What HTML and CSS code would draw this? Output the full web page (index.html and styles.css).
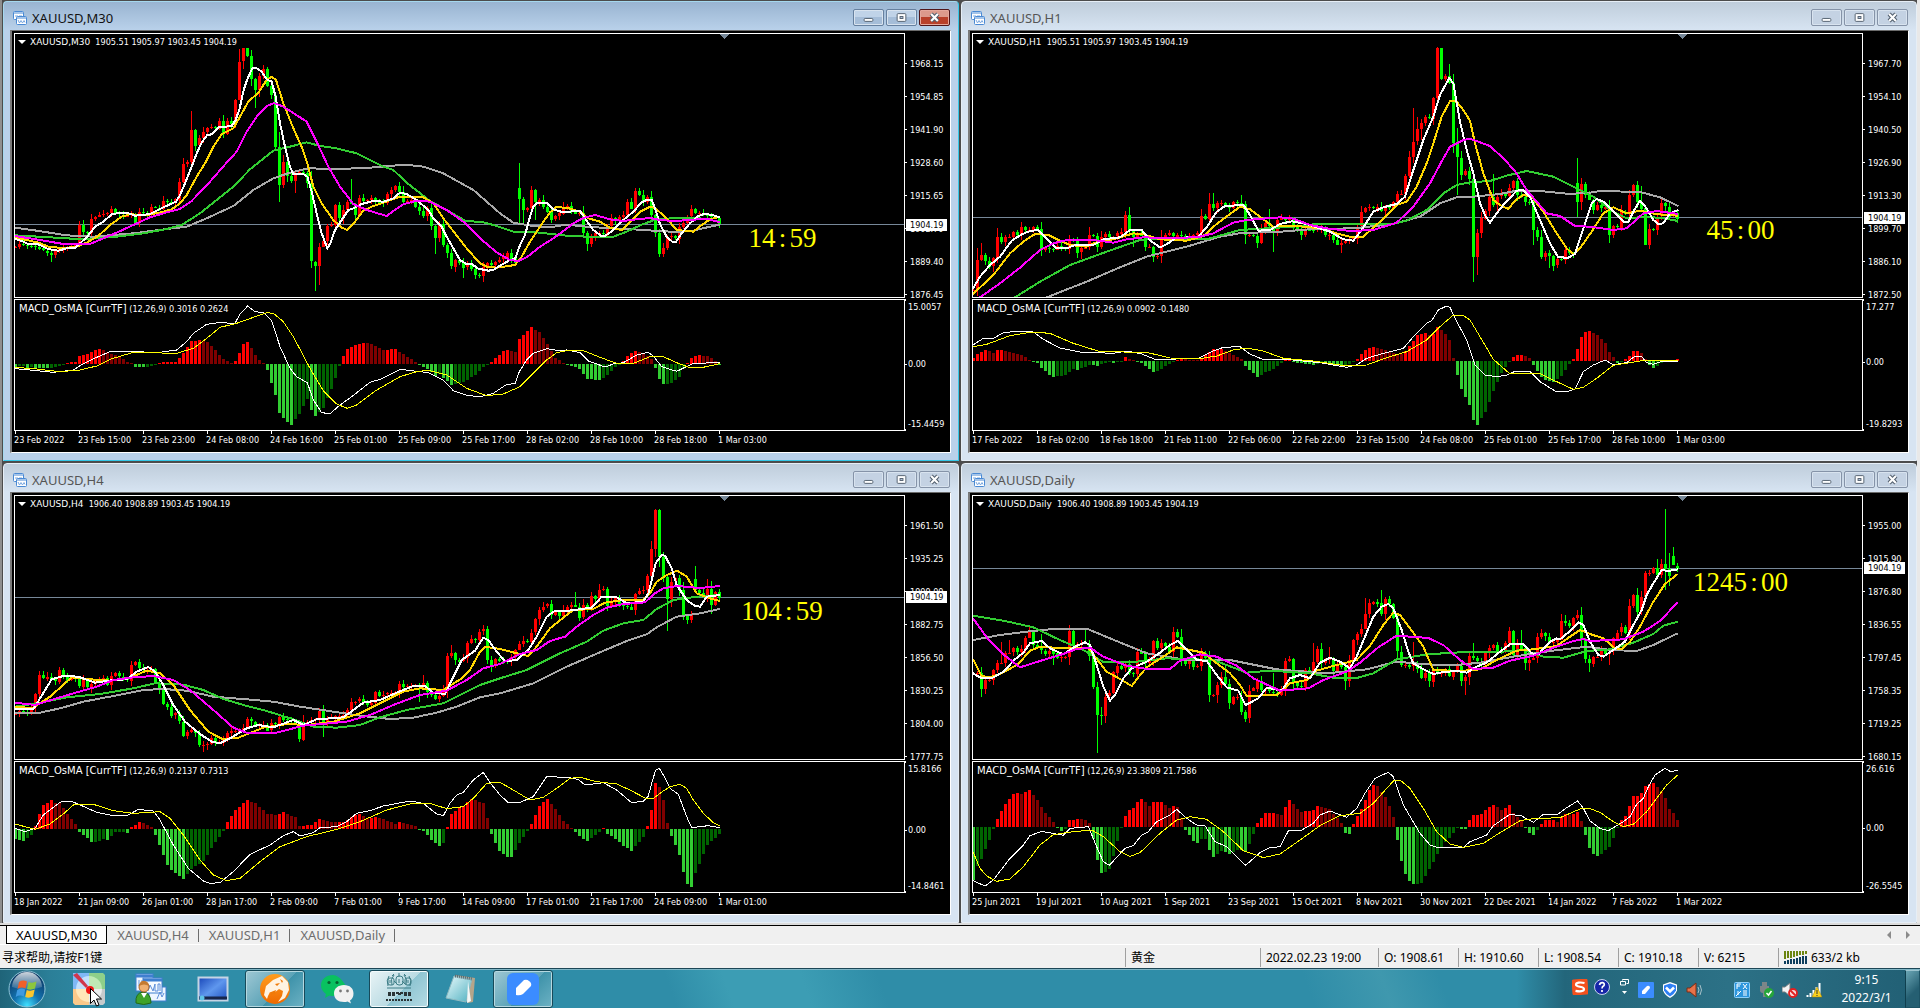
FILE: index.html
```html
<!DOCTYPE html>
<html lang="zh-CN">
<head>
<meta charset="utf-8">
<title>XAUUSD</title>
<link rel="stylesheet" href="styles.css">
</head>
<body>
<svg class="sprite" aria-hidden="true">
  <symbol id="i-chart" viewBox="0 0 14 14">
    <rect x="0.5" y="0.5" width="10" height="8" rx="1" fill="#fff" stroke="#4a8ad4"/>
    <path d="M1 2h9" stroke="#4a8ad4"/>
    <path d="M2 5h1M4 4v2M6 5h1M8 4v2" stroke="#7aa8e0"/>
    <rect x="3.500" y="5.500" width="10" height="8" rx="1" fill="#fff" stroke="#4a8ad4"/>
    <path d="M4 7h9" stroke="#4a8ad4"/>
    <path d="M5 9l1.500 3L8 9.500l1.500 2.500L11 9.500l1 2" fill="none" stroke="#7aa8e0"/>
  </symbol>
  <symbol id="i-min" viewBox="0 0 30 15">
    <rect x="10.500" y="8.500" width="9" height="3" rx="1" fill="#fff" stroke="#53606f"/>
  </symbol>
  <symbol id="i-max" viewBox="0 0 30 15">
    <rect x="10.500" y="3.500" width="9" height="8" rx="1" fill="#fff" stroke="#53606f"/>
    <rect x="13.500" y="6.500" width="3" height="2" fill="#b5c9de" stroke="#53606f"/>
  </symbol>
  <symbol id="i-close" viewBox="0 0 30 15">
    <path d="M11.500 4l7 7M18.500 4l-7 7" stroke="#53606f" stroke-width="4.400"/>
    <path d="M11.500 4l7 7M18.500 4l-7 7" stroke="#fff" stroke-width="2.200"/>
  </symbol>
</svg>

<main class="desk">
  <section class="win active">
    <header class="title">
      <svg class="ticon"><use href="#i-chart"/></svg><h2>XAUUSD,M30</h2>
      <button type="button" aria-label="Minimize"><svg><use href="#i-min"/></svg></button>
      <button type="button" aria-label="Maximize"><svg><use href="#i-max"/></svg></button>
      <button type="button" class="close" aria-label="Close"><svg><use href="#i-close"/></svg></button>
    </header>
    <div class="client">
      <div class="plot">
        <svg class="price" data-chart="m30" viewBox="45 102 2667 789" preserveAspectRatio="none"></svg>
        <p class="head"><span>XAUUSD,M30</span>&nbsp; 1905.51 1905.97 1903.45 1904.19</p>
        <p class="timer t-m30">14<i>:</i>59</p>
      </div>
      <div class="scale s-m30">
        <ul><li>1968.15</li><li>1954.85</li><li>1941.90</li><li>1928.60</li><li>1915.65</li><li>1902.70</li><li>1889.40</li><li>1876.45</li></ul>
        <b>1904.19</b>
      </div>
      <div class="plot">
        <svg class="macd" data-chart="m30" viewBox="45 900 2667 390" preserveAspectRatio="none"></svg>
        <p class="ind"><span>MACD_OsMA [CurrTF]</span> (12,26,9) 0.3016 0.2624</p>
      </div>
      <div class="sub s-m30"><span>15.0057</span><span class="zero">0.00</span><span>-15.4459</span></div>
      <ul class="time"><li>23 Feb 2022</li><li>23 Feb 15:00</li><li>23 Feb 23:00</li><li>24 Feb 08:00</li><li>24 Feb 16:00</li><li>25 Feb 01:00</li><li>25 Feb 09:00</li><li>25 Feb 17:00</li><li>28 Feb 02:00</li><li>28 Feb 10:00</li><li>28 Feb 18:00</li><li>1 Mar 03:00</li></ul>
    </div>
  </section>

  <section class="win">
    <header class="title">
      <svg class="ticon"><use href="#i-chart"/></svg><h2>XAUUSD,H1</h2>
      <button type="button" aria-label="Minimize"><svg><use href="#i-min"/></svg></button>
      <button type="button" aria-label="Maximize"><svg><use href="#i-max"/></svg></button>
      <button type="button" class="close" aria-label="Close"><svg><use href="#i-close"/></svg></button>
    </header>
    <div class="client">
      <div class="plot">
        <svg class="price" data-chart="h1" viewBox="39 102 2667 789" preserveAspectRatio="none"></svg>
        <p class="head"><span>XAUUSD,H1</span>&nbsp; 1905.51 1905.97 1903.45 1904.19</p>
        <p class="timer t-h1">45<i>:</i>00</p>
      </div>
      <div class="scale s-h1">
        <ul><li>1967.70</li><li>1954.10</li><li>1940.50</li><li>1926.90</li><li>1913.30</li><li>1899.70</li><li>1886.10</li><li>1872.50</li></ul>
        <b>1904.19</b>
      </div>
      <div class="plot">
        <svg class="macd" data-chart="h1" viewBox="39 900 2667 390" preserveAspectRatio="none"></svg>
        <p class="ind"><span>MACD_OsMA [CurrTF]</span> (12,26,9) 0.0902 -0.1480</p>
      </div>
      <div class="sub s-h1"><span>17.277</span><span class="zero">0.00</span><span>-19.8293</span></div>
      <ul class="time"><li>17 Feb 2022</li><li>18 Feb 02:00</li><li>18 Feb 18:00</li><li>21 Feb 11:00</li><li>22 Feb 06:00</li><li>22 Feb 22:00</li><li>23 Feb 15:00</li><li>24 Feb 08:00</li><li>25 Feb 01:00</li><li>25 Feb 17:00</li><li>28 Feb 10:00</li><li>1 Mar 03:00</li></ul>
    </div>
  </section>

  <section class="win">
    <header class="title">
      <svg class="ticon"><use href="#i-chart"/></svg><h2>XAUUSD,H4</h2>
      <button type="button" aria-label="Minimize"><svg><use href="#i-min"/></svg></button>
      <button type="button" aria-label="Maximize"><svg><use href="#i-max"/></svg></button>
      <button type="button" class="close" aria-label="Close"><svg><use href="#i-close"/></svg></button>
    </header>
    <div class="client">
      <div class="plot">
        <svg class="price" data-chart="h4" viewBox="45 108 2667 789" preserveAspectRatio="none"></svg>
        <p class="head"><span>XAUUSD,H4</span>&nbsp; 1906.40 1908.89 1903.45 1904.19</p>
        <p class="timer t-h4">104<i>:</i>59</p>
      </div>
      <div class="scale s-h4">
        <ul><li>1961.50</li><li>1935.25</li><li>1909.00</li><li>1882.75</li><li>1856.50</li><li>1830.25</li><li>1804.00</li><li>1777.75</li></ul>
        <b>1904.19</b>
      </div>
      <div class="plot">
        <svg class="macd" data-chart="h4" viewBox="45 906 2667 390" preserveAspectRatio="none"></svg>
        <p class="ind"><span>MACD_OsMA [CurrTF]</span> (12,26,9) 0.2137 0.7313</p>
      </div>
      <div class="sub s-h4"><span>15.8166</span><span class="zero">0.00</span><span>-14.8461</span></div>
      <ul class="time"><li>18 Jan 2022</li><li>21 Jan 09:00</li><li>26 Jan 01:00</li><li>28 Jan 17:00</li><li>2 Feb 09:00</li><li>7 Feb 01:00</li><li>9 Feb 17:00</li><li>14 Feb 09:00</li><li>17 Feb 01:00</li><li>21 Feb 17:00</li><li>24 Feb 09:00</li><li>1 Mar 01:00</li></ul>
    </div>
  </section>

  <section class="win">
    <header class="title">
      <svg class="ticon"><use href="#i-chart"/></svg><h2>XAUUSD,Daily</h2>
      <button type="button" aria-label="Minimize"><svg><use href="#i-min"/></svg></button>
      <button type="button" aria-label="Maximize"><svg><use href="#i-max"/></svg></button>
      <button type="button" class="close" aria-label="Close"><svg><use href="#i-close"/></svg></button>
    </header>
    <div class="client">
      <div class="plot">
        <svg class="price" data-chart="d1" viewBox="39 108 2667 789" preserveAspectRatio="none"></svg>
        <p class="head"><span>XAUUSD,Daily</span>&nbsp; 1906.40 1908.89 1903.45 1904.19</p>
        <p class="timer t-d1">1245<i>:</i>00</p>
      </div>
      <div class="scale s-d1">
        <ul><li>1955.00</li><li>1915.90</li><li>1876.80</li><li>1836.55</li><li>1797.45</li><li>1758.35</li><li>1719.25</li><li>1680.15</li></ul>
        <b>1904.19</b>
      </div>
      <div class="plot">
        <svg class="macd" data-chart="d1" viewBox="39 906 2667 390" preserveAspectRatio="none"></svg>
        <p class="ind"><span>MACD_OsMA [CurrTF]</span> (12,26,9) 23.3809 21.7586</p>
      </div>
      <div class="sub s-d1"><span>26.616</span><span class="zero">0.00</span><span>-26.5545</span></div>
      <ul class="time"><li>25 Jun 2021</li><li>19 Jul 2021</li><li>10 Aug 2021</li><li>1 Sep 2021</li><li>23 Sep 2021</li><li>15 Oct 2021</li><li>8 Nov 2021</li><li>30 Nov 2021</li><li>22 Dec 2021</li><li>14 Jan 2022</li><li>7 Feb 2022</li><li>1 Mar 2022</li></ul>
    </div>
  </section>
</main>

<nav class="tabs">
  <button type="button" class="on">XAUUSD,M30</button>
  <button type="button">XAUUSD,H4</button>
  <button type="button">XAUUSD,H1</button>
  <button type="button">XAUUSD,Daily</button>
  <div class="arrows">
    <button type="button" aria-label="Previous tab"><svg viewBox="0 0 4 8"><path d="M4 0v8L0 4z"/></svg></button>
    <button type="button" aria-label="Next tab"><svg viewBox="0 0 4 8"><path d="M0 0v8l4-4z"/></svg></button>
  </div>
</nav>

<div class="status">
  <span class="help">寻求帮助,请按F1键</span>
  <span class="c-name">黄金</span>
  <span class="c-time">2022.02.23 19:00</span>
  <span class="c-num">O: 1908.61</span>
  <span class="c-num">H: 1910.60</span>
  <span class="c-num">L: 1908.54</span>
  <span class="c-num">C: 1910.18</span>
  <span class="c-num">V: 6215</span>
  <span class="c-net"><svg viewBox="0 0 23 13"><path d="M1 0v8M4 0v7M7 0v7M10 0v6M13 0v5M16 0v4M19 0v4M22 0v3" stroke="#6b8510" stroke-width="2"/><path d="M1 10v3M4 9v4M7 8v5M10 8v5M13 7v6M16 6v7M19 5v8M22 5v8" stroke="#0c3d5c" stroke-width="2"/></svg>633/2 kb</span>
</div>

<footer class="taskbar">
  <button type="button" aria-label="Start">
    <svg width="38" height="38" viewBox="0 0 38 38">
      <defs><radialGradient id="orb" cx=".5" cy=".95" r=".9"><stop offset="0" stop-color="#3fe0ff"/><stop offset=".4" stop-color="#1373b0"/><stop offset="1" stop-color="#0b3560"/></radialGradient>
      <linearGradient id="gloss" x2="0" y2="1"><stop offset="0" stop-color="#fff" stop-opacity=".8"/><stop offset="1" stop-color="#fff" stop-opacity=".1"/></linearGradient></defs>
      <circle cx="19" cy="19" r="18" fill="url(#orb)" stroke="#8fc4d6"/>
      <path d="M4 17a15 15 0 0 1 30 0q-15 5-30 0z" fill="url(#gloss)"/>
      <path d="M11 12q4-2.500 8-.5l-1.500 7q-4-2-8 .5z" fill="#f0602a"/>
      <path d="M20.500 12q4 1.500 8-.5l-1.500 7q-4 2-8 .5z" fill="#8cc63e"/>
      <path d="M9.200 20q4-2.500 8-.5l-1.500 7q-4-2-8 .5z" fill="#3f9ae0"/>
      <path d="M18.700 20q4 1.500 8-.5l-1.500 7q-4 2-8 .5z" fill="#fcc62e"/>
    </svg>
  </button>
  <button type="button" aria-label="Picker">
    <svg width="32" height="32" viewBox="0 0 32 32">
      <path d="M0 0h16v16H0z" fill="#7fb8f5"/><path d="M16 0h14l2 2v14H16z" fill="#8ed08a"/><path d="M0 16h16v16H2l-2-2z" fill="#fbc98a"/><path d="M16 16h16v14l-2 2H16z" fill="#c5cacc"/>
      <path d="M16 3a13 13 0 0 0-13 13h13z" fill="#c2dffc"/><path d="M16 3a13 13 0 0 1 13 13H16z" fill="#bfeab5"/><path d="M3 16a13 13 0 0 0 13 13V16z" fill="#ffe7b8"/><path d="M29 16a13 13 0 0 1-13 13V16z" fill="#eceeee"/>
      <path d="M0 2l4-2 11 13-2 2z" fill="#d0364c"/><circle cx="17" cy="17" r="4" fill="#f01818"/>
    </svg>
  </button>
  <button type="button" aria-label="Trade terminal">
    <svg width="32" height="32" viewBox="0 0 32 32">
      <rect x="1" y="1" width="17" height="17" fill="#eef6ff" stroke="#3f7fd0"/><path d="M1 3h17" stroke="#3f7fd0" stroke-width="3"/><path d="M4 7v6M7 7v5" stroke="#6a9ae0"/>
      <rect x="14" y="14" width="17" height="14" fill="#eef6ff" stroke="#3f7fd0"/>
      <rect x="8" y="5" width="19" height="15" fill="#f7fbff" stroke="#3f7fd0"/><path d="M8 7h19" stroke="#3f7fd0" stroke-width="3"/>
      <path d="M13 18l2-6 3 6 2-7v7h3v-7h2v7M22 26l3-7 2 5 2-4" fill="none" stroke="#5a8cd8"/>
      <path d="M1 30q-1-10 7-11 8 1 8 11-7 3-15 0z" fill="#3fa32a" stroke="#236a18"/><path d="M6 20l3 5 3-5z" fill="#fff"/>
      <circle cx="9" cy="14" r="5" fill="#f0b070" stroke="#a8622a"/><path d="M4 13q1-6 6-5 4 1 4 5-5-3-10 0z" fill="#c47a30"/>
    </svg>
  </button>
  <button type="button" aria-label="Desktop">
    <svg width="32" height="32" viewBox="0 0 32 32">
      <defs><linearGradient id="scr" x2="1" y2="1"><stop offset="0" stop-color="#1846b8"/><stop offset=".5" stop-color="#5f97ee"/><stop offset="1" stop-color="#1c4fc0"/></linearGradient></defs>
      <rect x="1.500" y="4.500" width="29" height="23" fill="url(#scr)" stroke="#c5d4e4" stroke-width="2"/><path d="M2 25h28" stroke="#18264a" stroke-width="3"/><circle cx="5" cy="25" r="2.500" fill="#5fc4e8"/>
    </svg>
  </button>
  <button type="button" class="run" aria-label="Tiger client">
    <svg width="32" height="32" viewBox="0 0 32 32">
      <defs><linearGradient id="tig" x2="0" y2="1"><stop offset="0" stop-color="#ff9d1e"/><stop offset="1" stop-color="#ef6a00"/></linearGradient></defs>
      <circle cx="16" cy="16" r="15" fill="url(#tig)"/>
      <path d="M8 26L5 22l2-9 7-6 9-4 6 6 1 8-4 8-7 4 4-6 1-5-4-2-5 4-4-1-2 4z" fill="#fff3e2"/>
      <path d="M16 11l5-1-3 3zM12 19l5-2-1 4-4 1zM21 6l3 2-1 2z" fill="#f07a08"/>
    </svg>
  </button>
  <button type="button" aria-label="WeChat">
    <svg width="34" height="30" viewBox="0 0 34 30">
      <path d="M13 1C6 1 1 5.500 1 11.500 1 15 3 18 6 20l-1 4 4.500-2.500q2 .5 4 .5 12-1 12-10.500S20 1 13 1z" fill="#09c160"/>
      <circle cx="9" cy="8.500" r="1.600" fill="#06602f"/><circle cx="17" cy="8.500" r="1.600" fill="#06602f"/>
      <path d="M24 11c-6 0-10 3.500-10 8.500s4 8.500 10 8.500q2 0 3.500-.5L31 29.500l-1-3q3.500-2.500 3.500-7C33.500 14.500 30 11 24 11z" fill="#f1f1f1"/>
      <circle cx="20.500" cy="17" r="1.400" fill="#777"/><circle cx="27.500" cy="17" r="1.400" fill="#777"/>
    </svg>
  </button>
  <button type="button" class="run front" aria-label="MT4">
    <svg width="32" height="32" viewBox="0 0 32 32">
      <g fill="none" stroke="#3d7d86"><path d="M6 3q-3 4-1 10M11 2q-4 4-2 10M16 0v4M21 2q4 4 2 10M26 3q3 4 1 10M9 3l2-2M23 3l-2-2"/><rect x="5" y="5" width="6" height="7" rx="2"/><rect x="13" y="3" width="7" height="9" rx="3"/><rect x="22" y="5" width="6" height="7" rx="2"/><path d="M4 15h24M11 8l3 3M19 8l3 3M7 7v3M16 6v4M25 7v3"/></g>
      <path d="M5 20h23M5 22h8M15 21h4M21 22h7" stroke="#2b3436" stroke-width="2" stroke-dasharray="3 1"/><path d="M3 27h27" stroke="#2b3436" stroke-width="2" stroke-dasharray="2 1"/>
    </svg>
  </button>
  <button type="button" aria-label="Notepad">
    <svg width="32" height="32" viewBox="0 0 32 32">
      <defs><linearGradient id="pad" x2="1" y2="1"><stop offset="0" stop-color="#e9fafc"/><stop offset="1" stop-color="#4fb0c0"/></linearGradient></defs>
      <path d="M10 2l20 3-2 24-5 1z" fill="#b5a58a"/><path d="M9 3l18 3-6 23L1 25z" fill="url(#pad)" stroke="#8fb9c0"/><path d="M23 8l3 20-4 2z" fill="#f4f7f7"/><path d="M10 3l17 3" stroke="#5a6a70" stroke-width="3" stroke-dasharray="1 1"/>
    </svg>
  </button>
  <button type="button" class="run" aria-label="Notes">
    <svg width="32" height="32" viewBox="0 0 32 32">
      <rect width="32" height="32" rx="6" fill="#3b8cff"/><path d="M9 22V15l8-8q3-1 5 1 3 2 2 5l-8 8q-3 2-7 1z" fill="#fff"/>
    </svg>
  </button>
  <svg class="cursor" viewBox="0 0 12 19"><path d="M.5.500v15l3.500-3.500 2.500 6 2.500-1-2.500-6h5z" fill="#fff" stroke="#000"/></svg>

  <div class="lang">
    <svg viewBox="0 0 16 16"><rect width="16" height="16" rx="2" fill="#f4511e" transform="rotate(-4 8 8)"/><path d="M12.500 4C8 3 4 3.500 4 5.700c0 2.600 8 1.500 8 4.300 0 2.500-4 2.700-8.500 1.800" fill="none" stroke="#fff" stroke-width="2.200"/></svg>
    <svg viewBox="0 0 16 16"><circle cx="8" cy="8" r="7.500" fill="#1626a8" stroke="#c8d2ee"/><path d="M5.500 6q.5-2.500 3-2.300 2.500.6 1.500 2.800Q8 7.500 8 9.500M8 11v2" fill="none" stroke="#fff" stroke-width="1.700"/></svg>
    <svg viewBox="0 0 16 16"><path d="M6.500 1.500V.5h6v4h-2M4.500 2.500h5v3.500h-5z" fill="none" stroke="#fff"/><path d="M6 12h5l-2.500 3z" fill="#fff"/></svg>
  </div>
  <div class="tray">
    <svg viewBox="0 0 16 16"><rect width="16" height="16" rx="1" fill="#3b8cff"/><path d="M4 12V9l5-5q3-1 3 2l-5 6z" fill="#fff"/></svg>
    <svg viewBox="0 0 16 16"><path d="M8 0l7 2.500v6Q13 13.500 8 16 3 13.500 1 8.500v-6z" fill="#fff"/><path d="M8 1.500l6 2v5Q12 12.500 8 14.500 4 12.500 2 8.500v-5z" fill="#2d7ff5"/><path d="M4 5.500l4 4 4-4" fill="none" stroke="#fff" stroke-width="2.500"/></svg>
    <svg viewBox="0 0 16 16"><path d="M1 6h3l6-5v14l-6-5H1z" fill="#e8724a" stroke="#7c2c14"/><path d="M12 5q2 3 0 6M14 3q3 5 0 10" fill="none" stroke="#a5c0c8"/></svg>
    <svg class="apart" viewBox="0 0 16 16"><rect x=".5" y=".5" width="15" height="15" rx="1" fill="#2c96dd" stroke="#8ed0fa"/><path d="M3 7V2h4M3 4h3M9 2l4 5M13 2L9 7M4 13V9M9 13h4M9 11h4M9 9h4M2 14l5-5" stroke="#fff" fill="none"/></svg>
    <svg viewBox="0 0 16 16"><path d="M4 0h5v4H4zM2 4h9v4q0 3-3 3v4H5v-4Q2 11 2 8z" fill="#7d8688"/><circle cx="11" cy="11" r="5" fill="#26a63a"/><path d="M8.500 11l2 2 3-4" fill="none" stroke="#fff" stroke-width="1.500"/></svg>
    <svg viewBox="0 0 16 16"><path d="M0 5h3l5-4v13l-5-4H0z" fill="#f3f3f3" stroke="#747b7d"/><circle cx="11" cy="11" r="4" fill="#f6dada" stroke="#e02020" stroke-width="1.800"/><path d="M8.500 8.500l5 5" stroke="#e02020" stroke-width="1.800"/></svg>
    <svg viewBox="0 0 16 16"><path d="M1.500 15v-2M4.500 15v-4M7.500 15V8M10.500 15V5M13.500 15V1" stroke="#fff" stroke-width="2"/><path d="M11 5l5 10H6z" fill="#fcd21c" stroke="#a37e00" stroke-width=".5"/><path d="M11 8v4M11 13v1" stroke="#333"/></svg>
  </div>
  <time class="clock">9:15<br>2022/3/1</time>
  <button type="button" class="peek" aria-label="Show desktop"></button>
</footer>
<script src="charts.js"></script>
</body>
</html>
```
FILE: styles.css
```css
* { box-sizing: border-box; margin: 0; padding: 0; }
html, body { height: 100%; }
body {
  display: flex; flex-direction: column; min-height: 100vh;
  background: #f0f0f0; color: #000;
  font: 12px/16px "Noto Sans", "Noto Sans CJK SC", sans-serif;
}
ul { list-style: none; }
button { font: inherit; color: inherit; background: none; border: 0; }
svg { display: block; }
.sprite { position: absolute; width: 0; height: 0; }

.desk {
  flex: 1; min-height: 0;
  display: grid; grid-template: 1fr 1fr / 1fr 1fr; gap: 2px;
  padding: 1px 3px 2px; background: #4c4c4c;
  box-shadow: inset 0 -2px #dcdcdc, inset 2px 0 #8f8f8f, inset -3px 0 #e8e8e8;
}
.win {
  display: flex; flex-direction: column; min-width: 0; min-height: 0;
  padding: 0 7px 7px 6px; border: 1px solid #e6eef6; border-radius: 4px 4px 0 0;
  background: linear-gradient(#bfcddb, #d7e4f2 28px);
}
.win.active {
  border-color: #a5d8ee #35c8e8 #35c8e8 #a5d8ee;
  background: linear-gradient(#99b4d1, #b9d1ea 28px);
}
.title { display: flex; align-items: center; gap: 2px; height: 28px; padding: 3px 1px 0 0; color: #555; }
.title h2 { flex: 1; font-size: 13px; font-weight: 400; padding-left: 3px; }
.active .title { color: #111; }
.ticon { width: 14px; height: 14px; margin-left: 3px; }
.title button {
  width: 31px; height: 17px; border: 1px solid #8593a8; border-radius: 2px;
  background: #c4d2e3; box-shadow: inset 0 0 0 1px #d8e3ef;
}
.title button svg { width: 29px; height: 15px; }
.active .title button { background: linear-gradient(#c0d3e8 50%, #a5bdd8 50%); border-color: #66809f; }
.active .title .close { background: linear-gradient(#dc9a8c 50%, #b8402a 50%); border-color: #50161a; box-shadow: inset 0 0 0 1px #e5a89c; }

.client {
  flex: 1; min-height: 0;
  display: grid; grid-template: minmax(0, 265fr) minmax(0, 132fr) 20px / minmax(0, 1fr) 45px; row-gap: 1px;
  padding: 2px 0 0 2px; background: #000; color: #fff;
  border: solid #fff; border-width: 1px 1px 1px 2px; border-top-color: #6b6b6b; border-left-color: #7a7a7a;
  font: 9px/12px "DejaVu Sans Condensed", "DejaVu Sans", sans-serif;
}
.plot { position: relative; border: 1px solid #fff; min-width: 0; min-height: 0; }
.plot svg { width: 100%; height: 100%; }
.head, .ind, .timer { position: absolute; white-space: nowrap; }
.head { left: 15px; top: 2px; }
.head span, .ind span { font-family: "DejaVu Sans", sans-serif; }
.ind span { font-size: 10px; }
.head::before { content: ""; position: absolute; left: -12px; top: 4px; border: solid transparent; border-width: 4px 4px 0; border-top-color: #fff; }
.ind { left: 4px; top: 3px; }
.timer { color: #ff0; font: 27px/30px "Liberation Serif", serif; }
.timer i { display: inline-block; width: 14px; text-align: center; font-style: normal; }
.t-m30 { left: 82.500%; top: 72%; }
.t-h1 { left: 82.500%; top: 69%; }
.t-h4 { left: 81.700%; top: 38%; }
.t-d1 { left: 81%; top: 27%; }

.scale { position: relative; min-height: 0; }
.scale ul { display: flex; flex-direction: column; height: 100%; }
.scale ul::before { content: ""; flex: 0 0 calc(100% * 14 / 265); }
.scale li { flex: 0 0 calc(100% * 33 / 265); display: flex; align-items: center; gap: 3px; }
.scale li::before { content: ""; width: 2px; height: 1px; background: #fff; }
.scale b {
  position: absolute; left: 1px; width: 41px; padding-left: 4px; margin-top: -6px;
  font-weight: 400; background: #fff; color: #000;
}
.scale.s-m30 b { top: 72.500%; }
.scale.s-h1 b { top: 69.800%; }
.scale.s-h4 b { top: 38.500%; }
.scale.s-d1 b { top: 27.600%; }
.sub { position: relative; display: flex; flex-direction: column; justify-content: space-between; padding: 2px 0 1px 3px; }
.sub::before, .sub::after { content: ""; position: absolute; left: 0; width: 1px; height: 2px; background: #fff; }
.sub::before { top: 0; }
.sub::after { bottom: 0; }
.sub .zero { position: absolute; margin-top: -6px; }
.sub .zero::before { content: ""; position: absolute; left: -3px; top: 6px; width: 2px; height: 1px; background: #fff; }
.sub.s-m30 .zero { top: 49.500%; }
.sub.s-h1 .zero { top: 47.500%; }
.sub.s-h4 .zero { top: 52%; }
.sub.s-d1 .zero { top: 50.500%; }
.time { grid-column: 1 / -1; display: flex; margin-top: -1px; }
.time li { flex: 0 0 calc((100% - 45px) * 64 / 891); white-space: nowrap; }
.time li::before { content: ""; display: block; width: 1px; height: 3px; margin-left: 1px; background: #fff; }

.tabs { flex: none; display: flex; height: 20px; padding-left: 6px; border-top: 1px solid #000; border-bottom: 1px solid #fff; color: #6d6d6d; font-size: 13px; }
.tabs > button { position: relative; height: 18px; padding: 0 10px; }
.tabs > button:not(.on)::after { content: ""; position: absolute; right: 0; top: 3px; height: 13px; border-right: 1px solid #6d6d6d; }
.tabs > .on { background: #fff; color: #000; border: solid #000; border-width: 0 1px 1px; padding: 0 9px; }
.arrows { margin-left: auto; display: flex; gap: 15px; padding-right: 10px; align-items: center; }
.arrows svg { width: 4px; height: 8px; fill: #8b8b8b; }

.status { flex: none; display: flex; align-items: center; height: 23px; padding: 2px 0 0 2px; white-space: nowrap; }
.status span + span { border-left: 1px solid #a0a0a0; padding-left: 5px; height: 19px; line-height: 19px; }
.help { flex: 1; }
.c-name { width: 135px; }
.c-time { width: 118px; }
.c-num { width: 80px; }
.c-net { display: flex; align-items: center; gap: 4px; width: 142px; }
.c-net svg { width: 23px; height: 13px; }

.taskbar {
  position: relative; flex: none; display: flex; align-items: center; gap: 2px; height: 40px; padding-top: 1px;
  border-top: 1px solid #1d4656; box-shadow: inset 0 1px #7fb6c6;
  background:
    linear-gradient(90deg, #1f6479 0, #2b7f98 50px, transparent 110px),
    linear-gradient(90deg, transparent 79%, #23667b 81.500%, #2c7186 90%, #215f74),
    linear-gradient(70deg, transparent 35%, #3c9db4 38%, #3c9db4 42%, transparent 46%, transparent 68%, #3f98ae 72%, transparent 75%),
    #2f8da8;
}
.taskbar > button { flex: none; display: grid; place-items: center; width: 60px; height: 38px; }
.taskbar > button:first-child { margin-left: -3px; }
.taskbar > .run { border: 1px solid #174a5a; border-radius: 3px; background: linear-gradient(135deg, #9fc8d4, #5ba3b7 55%, #3f93aa 55%, #6db2c4); box-shadow: inset 0 0 0 1px #b5d8e0; }
.taskbar > .front { background: linear-gradient(135deg, #e9f4f6, #b9dbe3 55%, #8fc5d2 55%, #b5dbe4); box-shadow: inset 0 0 0 1px #f3fbfc; }
.cursor { position: absolute; left: 90px; top: 19px; width: 12px; height: 19px; }
.lang { margin-left: auto; display: flex; gap: 6px; padding-bottom: 4px; }
.lang svg, .tray svg { width: 16px; height: 16px; }
.tray { display: flex; gap: 8px; padding: 2px 0 0 4px; }
.tray .apart { margin-left: 24px; }
.clock { width: 81px; padding-left: 4px; text-align: center; color: #fff; font-size: 12px; line-height: 18px; }
.taskbar > .peek { width: 15px; margin-left: -2px; border: 1px solid #7fb0bd; border-color: #9cc4cf #1d5365 #1d5365 #0f3f4e; background: linear-gradient(135deg, #6ba6b5, #255f72 60%); }
```
FILE: charts.js
```js
// Each series is a list of "x,y" pairs in chart units; three units are one pixel.
// A close may carry a third value, the bar's own open, where the market gapped.
const CHARTS = {
  m30: {
    x0: 46.5, zero: 1092, line: 673, top: 102,
    close: '46,740 60,732 85,738 110,740 130,752 152,765 175,748 200,742 228,735 240,675 252,697 264,700 276,657 300,645 320,640 336,628 350,640 370,650 390,642 405,668 420,635 440,640 456,622 478,625 490,602 510,608 528,598 540,545 551,492 563,485 575,390 587,437 599,415 611,396 623,385 635,382 650,385 660,362 671,400 683,362 695,372 707,300 719,185 731,145 743,168 755,238 767,270 779,228 791,208 803,258 815,285 827,442 839,555 851,487 863,528 875,542 887,518 899,515 911,520 923,550 935,785 947,797 959,740 971,722 983,678 995,675 1007,615 1019,655 1031,630 1043,605 1055,612 1067,645 1079,595 1095,605 1115,595 1130,605 1150,610 1163,582 1187,558 1199,575 1211,605 1235,600 1247,620 1271,648 1283,625 1295,678 1307,713 1319,672 1331,735 1343,760 1355,800 1367,780 1379,788 1391,803 1403,790 1427,825 1439,828 1451,800 1463,790 1475,795 1487,785 1511,772 1523,758 1535,775 1547,790 1558,597,565 1570,630 1582,625 1594,570 1606,605 1618,600 1630,620 1642,635 1654,658 1666,648 1678,640 1690,620 1702,618 1714,635 1726,640 1738,640 1750,700 1762,732 1774,712 1786,700 1798,700 1810,703 1822,678 1834,655 1846,665 1858,652 1870,645 1882,605 1894,625 1906,572 1918,585 1930,605 1942,590 1954,645 1966,700 1978,762 1990,743 2002,710 2014,708 2026,715 2038,680 2050,668 2062,650 2074,628 2086,640 2098,640 2110,645 2130,650 2150,655 2159,672',
    wicks: { 152: [0, 785], 719: [148], 731: [144, 206], 743: [144], 575: [333], 767: [0, 325], 791: [195], 839: [395, 605], 887: [0, 578], 947: [0, 872], 959: [0, 855], 1055: [538], 1199: [545], 1307: [0, 762], 1391: [0, 835], 1558: [490, 670], 1570: [590, 668], 1594: [558], 1606: [0, 660], 1762: [0, 755], 1978: [0, 773], 1906: [565] },
    ma: {
      gray: '45,683 110,692 200,706 280,710 400,700 500,687 560,680 620,655 700,618 760,570 820,535 870,518 925,505 1020,507 1110,503 1215,494 1270,500 1330,520 1420,570 1500,640 1540,668 1600,678 1650,682 1700,674 1760,680 1820,684 1900,688 1960,692 2030,696 2080,692 2130,680 2159,674',
      green: '45,706 150,712 250,718 350,710 430,700 500,687 545,675 600,640 700,560 750,508 820,452 870,440 920,427 960,438 1010,445 1070,460 1150,500 1180,510 1220,548 1290,603 1340,630 1395,662 1450,667 1480,675 1540,695 1610,697 1700,707 1800,712 1840,710 1880,695 1930,672 1970,658 2030,654 2100,655 2159,665',
      gold: '45,713 80,720 115,728 150,742 190,743 225,742 260,728 295,708 330,675 365,650 390,643 440,645 480,638 515,628 540,610 560,585 590,530 615,490 640,440 665,403 700,385 720,350 745,305 775,278 800,240 815,230 828,240 850,310 880,385 905,440 922,490 940,560 965,610 1000,660 1025,683 1042,690 1060,672 1090,632 1120,618 1150,608 1200,590 1270,592 1300,610 1330,655 1365,700 1400,745 1440,790 1460,800 1490,803 1545,795 1565,770 1590,725 1620,680 1650,637 1668,622 1700,623 1740,635 1765,655 1800,665 1830,683 1865,690 1885,670 1920,635 1950,620 1965,624 2000,655 2030,690 2080,695 2105,675 2130,658 2159,650',
      white: '45,717 65,723 85,732 115,733 145,747 175,752 200,745 225,745 240,730 262,710 285,680 310,665 335,643 360,638 385,640 405,647 430,645 455,640 490,622 528,605 540,585 557,545 575,500 590,460 605,428 622,405 635,403 657,382 695,378 707,360 719,325 731,270 743,235 757,205 770,205 785,215 800,238 815,245 827,290 840,370 855,440 870,500 880,523 910,522 922,530 935,575 950,640 965,700 982,745 992,728 1005,690 1025,660 1045,630 1060,625 1085,612 1120,603 1150,605 1180,595 1200,578 1220,582 1250,600 1285,630 1300,655 1325,680 1340,710 1360,745 1380,780 1400,793 1415,792 1435,806 1465,812 1480,810 1500,797 1530,780 1545,777 1558,740 1575,705 1590,650 1600,620 1610,609 1642,609 1660,628 1690,637 1725,633 1740,633 1755,655 1780,690 1805,709 1815,708 1840,690 1870,660 1900,635 1925,607 1940,600 1955,600 1965,625 1980,672 2000,710 2018,726 2028,725 2045,700 2070,670 2095,648 2115,641 2140,646 2159,652',
      magenta: '45,708 120,720 190,732 270,732 310,715 350,698 400,675 450,652 500,637 540,627 575,603 630,545 680,488 710,455 740,395 770,350 800,318 822,309 850,320 900,352 920,365 950,425 985,500 1020,560 1060,612 1100,630 1160,648 1180,633 1210,613 1250,602 1290,605 1340,630 1390,665 1440,715 1490,757 1530,780 1555,783 1580,772 1620,740 1660,715 1690,693 1720,670 1750,654 1785,645 1830,658 1870,663 1910,658 1950,654 1980,660 2020,663 2070,660 2120,656 2159,667'
    },
    macd: '45,1106 100,1111 160,1117 220,1110 240,1097 290,1072 330,1055 390,1054 470,1058 530,1050 560,1025 580,1000 620,973 655,968 705,970 720,942 743,918 765,935 790,938 815,962 840,1040 870,1105 890,1130 922,1148 940,1200 965,1238 990,1241 1020,1215 1055,1190 1110,1147 1140,1138 1200,1108 1285,1118 1330,1140 1360,1172 1400,1186 1440,1190 1480,1180 1520,1153 1545,1151 1558,1115 1580,1080 1600,1060 1640,1046 1670,1051 1700,1050 1740,1058 1765,1083 1815,1101 1840,1092 1870,1088 1910,1065 1945,1057 1960,1068 1985,1100 2030,1114 2080,1090 2159,1088',
    signal: '45,1102 110,1107 180,1115 240,1110 290,1098 330,1078 400,1057 530,1060 580,1045 620,1015 660,982 710,970 760,952 800,938 820,940 850,965 880,1010 930,1105 970,1172 1010,1212 1042,1225 1070,1215 1130,1170 1200,1130 1250,1115 1285,1111 1340,1125 1400,1165 1460,1187 1510,1182 1560,1160 1600,1120 1640,1080 1670,1058 1710,1050 1750,1052 1800,1072 1850,1090 1900,1090 1950,1070 1990,1070 2030,1088 2070,1103 2100,1104 2159,1091',
    hist: '46,1101 70,1098 82,1104 94,1100 106,1104 150,1104 180,1097 190,1093 200,1089 226,1086 238,1069 262,1063 286,1050 298,1047 322,1055 360,1072 380,1084 398,1089 405,1100 430,1101 465,1097 485,1087 528,1087 545,1068 575,1023 600,1020 625,1028 650,1055 670,1077 690,1089 707,1084 719,1057 731,1032 743,1026 767,1066 785,1087 795,1096 803,1112 827,1187 839,1240 863,1268 875,1274 899,1240 923,1195 935,1230 947,1248 971,1222 995,1165 1019,1098 1031,1068 1043,1045 1067,1034 1090,1029 1110,1031 1150,1050 1187,1047 1220,1070 1250,1087 1265,1098 1283,1106 1307,1127 1319,1122 1355,1155 1391,1145 1427,1125 1451,1102 1470,1089 1487,1074 1511,1053 1523,1050 1547,1056 1558,1018 1582,993 1594,981 1618,996 1642,1032 1666,1074 1690,1088 1705,1096 1738,1105 1762,1136 1798,1140 1822,1127 1846,1100 1860,1093 1872,1082 1882,1068 1906,1053 1930,1060 1954,1076 1966,1102 1978,1137 1990,1152 2014,1150 2038,1132 2055,1098 2074,1073 2098,1065 2122,1068 2146,1082 2159,1094'
  },
  h1: {
    x0: 40.5, zero: 1083, line: 652, top: 102,
    close: '41,870 53,780 65,765 77,782 89,800 101,775 113,712 125,728 137,712 149,712 161,697 173,705 185,682 197,692 209,690 221,682 233,687 245,750 257,745 281,750 293,738 305,745 317,748 329,717 341,722 353,758 365,745 377,740 389,705 401,708 413,740 425,710 437,702 449,710 461,710 473,700 485,695 497,645 509,690 521,712 533,705 545,708 557,740 569,740 581,770 593,768 605,710 629,700 641,710 653,705 677,712 700,705 713,700 725,647 737,657 749,612 761,625 773,610 785,610 797,618 809,625 821,607 833,610 845,612 857,705 869,705 881,708 893,728 905,690 917,670 929,680 941,698 953,660 965,655 977,660 989,655 1001,680 1013,690 1025,705 1037,690 1061,692 1080,685 1090,708 1110,705 1121,720 1133,735 1145,728 1160,722 1181,715 1193,680 1205,637 1217,625 1229,622 1241,625 1253,620 1265,632 1277,620 1289,622 1301,605 1313,582 1325,582 1337,528 1349,470 1361,425 1373,388 1385,370 1397,352 1409,355 1421,293 1433,143 1445,236 1457,228 1469,250 1481,430 1493,473 1505,523 1517,512 1529,537 1541,772 1553,700 1565,655 1577,632 1589,590 1601,615 1613,590 1625,580 1637,590 1649,565 1661,543 1673,585 1685,590 1697,605 1709,607 1721,690 1733,712 1745,773 1757,760 1769,768 1781,797 1793,778 1805,780 1817,750 1829,760 1841,765 1853,608,550 1865,553 1877,585 1889,600 1901,630 1913,615 1925,625 1937,620 1949,705 1961,678 1973,682 1985,635 1997,640 2009,585 2021,555 2033,605 2045,625 2057,735 2069,688 2081,690 2093,650 2105,610 2117,620 2129,650 2141,640 2153,658',
    wicks: { 53: [745], 65: [730], 113: [683], 245: [0, 768], 365: [0, 778], 389: [682], 497: [632], 509: [620], 521: [0, 742], 749: [578], 761: [578], 845: [585], 893: [0, 745], 929: [627], 941: [0, 755], 1145: [0, 758], 1361: [323], 1373: [350], 1385: [0, 420], 1433: [141, 300], 1445: [144, 240], 1469: [192], 1481: [222, 460], 1493: [385, 585], 1541: [0, 845], 1553: [0, 825], 1601: [522], 1721: [0, 735], 1769: [0, 805], 1853: [475, 652], 1949: [0, 730], 2069: [0, 748], 2045: [558] },
    ma: {
      gray: '260,892 380,845 480,802 560,770 680,740 780,710 850,698 940,697 1060,687 1180,685 1300,672 1380,650 1440,610 1490,592 1540,590 1620,582 1660,574 1740,573 1820,581 1880,580 1920,573 2040,576 2100,592 2155,618',
      green: '165,892 240,845 330,795 440,755 540,720 600,715 740,718 840,690 1000,680 1070,672 1300,672 1340,662 1400,630 1450,580 1490,555 1530,547 1590,543 1640,527 1700,513 1780,530 1850,565 1900,590 1960,635 2000,655 2060,650 2110,655 2155,663',
      gold: '39,882 100,825 150,760 190,725 225,702 265,705 300,722 330,735 380,740 420,722 460,718 520,700 550,703 600,718 680,722 730,708 770,672 840,620 870,628 900,650 940,680 1000,677 1080,685 1130,700 1170,710 1210,710 1260,665 1310,615 1340,605 1370,560 1400,490 1420,430 1445,350 1470,303 1490,305 1510,330 1530,362 1545,430 1570,520 1600,600 1620,615 1645,627 1665,602 1690,585 1715,590 1750,635 1790,700 1820,745 1840,763 1860,745 1895,695 1930,640 1960,622 2000,640 2040,632 2090,643 2140,645 2155,650',
      white: '39,865 60,830 90,795 120,770 155,722 185,703 210,693 235,690 255,712 290,745 320,745 345,735 400,735 430,718 480,712 510,690 545,690 575,725 600,742 620,733 645,715 715,710 740,682 770,635 795,618 850,615 870,645 895,692 930,690 960,672 995,664 1040,672 1080,685 1110,695 1150,718 1180,722 1205,690 1240,635 1270,622 1310,612 1335,590 1360,510 1390,420 1420,350 1440,285 1468,234 1480,250 1500,365 1520,450 1540,520 1560,610 1575,645 1590,668 1610,640 1630,615 1670,572 1690,570 1710,590 1740,660 1770,730 1795,772 1825,773 1845,762 1865,700 1895,610 1910,597 1930,605 1960,635 1990,665 2005,665 2020,635 2040,602 2060,625 2080,660 2095,672 2110,670 2130,640 2155,630',
      magenta: '60,892 120,850 180,803 240,750 280,730 320,720 400,720 460,728 500,718 550,712 650,715 720,710 760,700 820,668 860,660 960,652 1000,656 1050,675 1100,685 1170,693 1240,690 1310,668 1360,620 1410,550 1450,475 1470,440 1510,420 1530,416 1590,438 1630,475 1665,513 1700,570 1760,640 1800,648 1845,678 1890,680 1960,690 2000,685 2050,640 2090,633 2155,642'
    },
    macd: '39,1035 70,1015 100,1015 130,998 170,994 220,996 250,1018 300,1044 360,1056 460,1060 500,1053 545,1062 590,1080 650,1077 715,1075 760,1053 790,1042 840,1040 870,1062 910,1079 1000,1080 1080,1088 1160,1102 1190,1095 1220,1075 1270,1060 1330,1045 1360,1010 1400,970 1415,962 1435,930 1460,918 1470,922 1485,955 1520,1020 1545,1095 1575,1125 1610,1130 1640,1125 1665,1114 1710,1115 1740,1145 1790,1176 1820,1175 1845,1167 1870,1115 1900,1095 1935,1080 1960,1094 2000,1088 2025,1068 2045,1070 2060,1088 2080,1093 2110,1083 2155,1083',
    signal: '39,1040 80,1033 150,1007 215,996 270,1000 340,1030 420,1055 560,1057 630,1074 720,1076 770,1068 820,1050 860,1044 910,1053 970,1075 1060,1083 1160,1098 1220,1095 1280,1073 1340,1055 1400,1020 1440,980 1480,945 1510,947 1530,960 1560,1010 1600,1078 1650,1122 1740,1120 1790,1145 1840,1168 1870,1162 1910,1135 1960,1096 2040,1083 2155,1081',
    hist: '41,1075 53,1062 77,1049 101,1060 113,1050 125,1050 160,1060 190,1067 205,1078 215,1084 233,1090 245,1105 269,1124 281,1131 317,1125 341,1108 353,1110 390,1095 413,1098 440,1086 461,1088 485,1084 497,1071 520,1081 533,1087 545,1090 569,1108 581,1116 593,1114 615,1098 640,1087 655,1078 715,1079 737,1066 761,1048 785,1047 809,1060 845,1076 857,1100 881,1118 893,1130 917,1117 941,1107 965,1088 985,1077 1010,1089 1060,1094 1085,1090 1110,1093 1145,1102 1165,1095 1185,1084 1193,1077 1217,1048 1241,1040 1265,1047 1301,1060 1325,1062 1337,1052 1361,1023 1373,1005 1397,998 1409,1005 1421,1003 1433,981 1445,990 1457,1003 1469,1022 1481,1077 1493,1128 1505,1170 1529,1215 1541,1262 1553,1274 1577,1235 1601,1172 1625,1118 1640,1095 1655,1077 1665,1065 1685,1065 1710,1073 1721,1097 1745,1133 1765,1143 1781,1145 1805,1127 1829,1092 1841,1077 1853,1045 1865,1010 1877,996 1889,993 1913,1005 1937,1028 1949,1058 1961,1073 1973,1089 1990,1083 2009,1068 2021,1053 2033,1053 2045,1060 2057,1078 2069,1095 2081,1103 2105,1090 2130,1080 2153,1077'
  },
  h4: {
    x0: 46.5, zero: 1107, line: 412, top: 108,
    close: '46,762 60,752 70,755 82,758 94,740 106,703 119,645 131,655 143,650 155,655 167,665 179,630 191,645 203,662 215,655 227,658 239,680 251,660 263,682 275,672 287,660 310,655 323,675 335,648 347,640 360,650 383,662 395,615 407,606 419,625 431,630 455,628 467,668 479,690 491,732 503,740 515,767 527,760 539,785 551,828 563,815 575,810 587,820 599,855 611,855 623,852 635,835 647,848 659,848 671,840 683,818 695,812 715,812 731,805 743,778 755,785 767,795 790,795 803,812 815,790 827,793 839,770 851,778 875,780 887,792 899,838 911,785 923,785 947,777 959,752 971,792 983,775 1007,768 1030,765 1043,750 1055,725 1067,725 1079,718 1103,735 1115,730 1127,697 1139,708 1163,700 1187,697 1199,672 1211,680 1247,675 1259,680 1271,670 1283,698 1295,705 1307,718 1319,708 1331,690 1343,588 1355,580 1367,600 1379,605 1391,595 1403,550 1415,537 1427,540 1439,515 1451,508 1463,600 1475,615 1487,598 1499,603 1523,605 1535,592 1547,570 1559,552 1571,542 1583,545 1595,518 1607,478 1619,450 1631,440 1643,433 1655,465 1667,457 1679,468 1691,450 1703,440 1715,435 1727,440 1739,472 1751,435 1763,445 1775,408 1787,418 1799,390 1811,388 1823,440 1835,425 1847,415 1859,435 1871,438 1883,440 1895,450 1907,402 1919,393 1931,390 1943,348 1955,268 1967,150 1979,290 1991,350 2003,415 2015,365 2027,355 2039,390 2051,468 2063,480 2075,465 2087,390,358 2099,400 2111,410 2123,388 2135,435 2147,395 2159,412',
    wicks: { 143: [636], 191: [625], 275: [0, 698], 395: [602], 611: [0, 878], 623: [0, 872], 755: [770], 899: [0, 848], 971: [0, 832], 1271: [645], 1259: [0, 725], 1355: [555], 1475: [0, 638], 1727: [397], 1799: [373], 1955: [243], 1967: [147, 290], 1979: [147, 320], 1991: [275], 2003: [0, 513], 2087: [318], 2063: [0, 493], 2123: [357], 2135: [363, 463], 2015: [0, 440] },
    ma: {
      gray: '45,760 120,758 180,745 250,725 340,708 430,690 490,687 560,692 640,710 740,718 820,725 900,740 1000,755 1080,767 1170,777 1240,773 1310,758 1370,740 1440,712 1500,700 1600,670 1700,620 1800,577 1880,543 1940,523 1970,502 2030,470 2100,460 2159,447',
      green: '45,740 120,728 200,712 300,702 400,685 465,670 550,674 610,690 670,717 740,738 800,753 880,778 940,800 1010,803 1080,795 1140,772 1220,750 1330,730 1380,705 1440,675 1500,655 1580,630 1680,580 1760,545 1810,512 1870,490 1930,480 1970,447 2020,420 2090,410 2159,405',
      gold: '45,742 100,743 150,710 215,652 270,658 330,662 390,653 440,632 480,640 520,675 570,750 625,815 665,836 710,835 790,803 860,792 920,795 1000,785 1080,760 1150,725 1210,695 1260,685 1330,690 1385,655 1410,630 1440,575 1455,560 1500,567 1550,580 1585,588 1610,560 1650,505 1700,465 1720,450 1780,447 1815,428 1870,420 1930,420 1950,400 1970,365 2000,345 2032,332 2060,350 2090,400 2130,415 2159,423',
      white: '45,747 100,748 120,715 155,658 190,648 235,650 285,668 340,660 380,658 410,635 445,621 465,635 490,675 520,735 555,785 600,822 635,845 660,850 690,835 740,805 775,795 820,802 880,780 910,795 950,778 1030,772 1060,750 1090,728 1140,720 1190,698 1240,678 1275,678 1300,698 1335,702 1365,640 1385,600 1425,572 1450,533 1465,540 1490,575 1515,604 1550,600 1585,570 1610,530 1640,470 1665,452 1700,453 1775,443 1805,410 1850,412 1880,430 1930,425 1945,400 1955,360 1967,310 1985,285 1995,287 2015,325 2030,375 2060,420 2085,438 2100,440 2120,410 2159,405',
      magenta: '45,728 105,735 160,718 220,700 290,680 340,660 400,652 460,648 520,660 570,690 640,750 700,803 740,818 830,818 910,797 1040,785 1110,765 1180,735 1260,705 1340,692 1400,660 1450,625 1500,612 1560,582 1610,570 1650,543 1695,530 1730,500 1780,465 1820,443 1870,432 1935,427 1965,400 1990,385 2030,378 2100,384 2159,378'
    },
    macd: '45,1105 75,1115 105,1105 130,1065 160,1042 185,1024 215,1024 245,1037 290,1057 330,1065 385,1065 415,1048 460,1053 480,1080 520,1155 565,1225 610,1263 630,1270 660,1268 700,1235 750,1183 810,1155 850,1127 880,1115 900,1128 940,1118 960,1103 1010,1100 1040,1085 1070,1060 1110,1052 1150,1038 1230,1023 1270,1030 1310,1062 1330,1067 1350,1030 1370,1005 1390,997 1420,960 1450,937 1470,968 1500,1005 1525,1028 1560,1027 1600,1010 1640,950 1700,952 1735,958 1755,975 1810,968 1850,990 1895,1028 1930,1024 1945,1008 1955,970 1967,930 1978,925 1990,945 2010,985 2035,1003 2060,1070 2075,1103 2125,1097 2159,1103',
    signal: '45,1092 105,1108 150,1092 190,1062 220,1035 280,1033 340,1052 400,1060 480,1055 510,1075 550,1125 600,1200 640,1245 680,1262 720,1255 780,1205 840,1160 920,1130 1010,1108 1080,1085 1160,1050 1230,1032 1290,1030 1340,1046 1390,1040 1420,1015 1460,970 1500,967 1540,990 1590,1020 1630,1012 1670,985 1710,955 1740,952 1790,965 1850,972 1890,990 1935,1014 1960,1015 1990,993 2010,980 2040,973 2060,985 2080,1020 2110,1060 2140,1088 2159,1097',
    hist: '46,1138 70,1142 94,1125 106,1098 119,1060 131,1035 155,1020 170,1030 179,1028 203,1062 227,1092 239,1116 263,1135 275,1146 299,1143 311,1137 323,1140 347,1117 375,1115 385,1119 395,1101 419,1086 445,1096 458,1102 467,1125 479,1155 503,1215 515,1232 551,1256 575,1225 611,1203 635,1163 659,1130 671,1112 683,1086 707,1049 743,1020 767,1030 803,1061 827,1065 850,1057 887,1072 899,1098 935,1094 959,1078 1000,1086 1035,1086 1055,1070 1079,1062 1103,1075 1127,1070 1187,1091 1199,1086 1247,1098 1259,1110 1271,1113 1295,1140 1319,1158 1331,1150 1343,1098 1355,1060 1391,1037 1415,1017 1451,1029 1463,1077 1475,1125 1499,1173 1523,1190 1535,1190 1559,1148 1583,1112 1595,1092 1619,1037 1643,1017 1667,1047 1691,1083 1715,1104 1727,1115 1745,1136 1763,1142 1787,1125 1805,1112 1811,1104 1823,1122 1847,1137 1871,1158 1895,1172 1931,1130 1943,1098 1955,1047 1967,966 1979,982 1991,1022 2003,1092 2015,1130 2039,1185 2051,1238 2063,1274 2075,1281 2087,1238 2111,1182 2123,1155 2159,1122'
  },
  d1: {
    x0: 40.5, zero: 1101, line: 325, top: 108,
    close: '41,640 53,640 65,688 77,660 89,660 101,630 113,608 125,608 137,578 149,578 161,565 173,578 185,568 197,533 209,515 221,555 233,562 245,572 257,582 269,572 281,580 293,595 305,592 317,592 329,513 341,555 353,552 365,550 377,552 389,588 401,680 413,765 425,767 437,710 449,700 461,637 473,617 485,625 497,612 509,638 521,640 533,575 545,580 557,610 569,600 581,543 593,565 605,550 617,560 629,575 641,515 653,530 665,600 677,612 689,600 701,622 713,618 725,580 737,595 749,705 761,705 773,675 785,650 797,672 809,730 821,710 833,710 845,755 857,775 869,693 881,685 893,662 905,690 917,688 929,695 941,698 953,705 965,690 977,603 989,597 1001,670 1013,678 1025,680 1037,630 1049,632 1061,605 1073,567 1085,610 1097,600 1109,595 1121,635 1133,615 1145,620 1157,662 1169,600 1181,540 1193,523 1205,507 1217,463 1229,430 1241,425 1253,430 1265,462 1277,418 1289,432 1301,475 1313,575 1325,615 1337,615 1349,620 1361,610 1373,628 1385,655 1397,640 1409,665 1421,630 1433,640 1445,640 1457,628 1469,650 1481,635 1493,618 1505,662 1517,650 1529,588 1541,595 1553,605 1565,612 1577,580 1589,565 1601,555 1613,572 1625,575 1637,548 1649,513 1661,585 1673,548 1685,565 1697,610 1709,600 1721,595 1733,532 1745,520 1757,530 1769,545 1781,545 1793,540 1805,483 1817,490 1829,500 1841,475 1853,465 1865,540 1877,597 1889,610 1901,590 1913,590 1925,572 1937,580 1949,575 1961,535 1973,518 1985,502 1997,520 2009,437 2021,405 2033,455 2045,412 2057,340 2069,340 2081,325 2093,345 2105,312 2117,328 2129,350 2141,315,288 2153,328,318',
    wicks: { 65: [0, 710], 125: [545], 149: [540], 209: [502], 245: [522], 281: [0, 613], 377: [508], 413: [0, 878], 425: [742, 795], 641: [500], 797: [615], 749: [0, 725], 773: [0, 730], 857: [0, 785], 941: [640], 1061: [550], 1109: [560], 1157: [0, 692], 1217: [415], 1265: [390], 1361: [547], 1409: [0, 683], 1517: [0, 705], 1541: [550], 1685: [510], 1709: [0, 632], 1817: [465], 1853: [450], 1889: [0, 638], 1949: [0, 615], 2033: [385], 2093: [297], 2117: [148, 392], 2129: [280, 380], 2141: [262] },
    ma: {
      gray: '39,540 120,525 200,515 290,506 385,508 450,535 560,580 680,600 810,600 950,628 1100,640 1220,628 1310,605 1400,613 1480,616 1560,608 1660,590 1770,573 1880,560 1950,570 2030,573 2080,555 2153,520',
      green: '39,467 130,482 220,502 300,540 370,570 430,606 530,605 620,595 760,600 860,638 930,632 1050,640 1130,655 1190,654 1240,640 1310,598 1400,583 1500,577 1600,577 1690,570 1750,590 1810,593 1880,573 1950,568 2020,548 2080,522 2110,497 2153,485',
      gold: '39,598 65,648 90,652 125,640 175,612 210,572 240,560 310,565 385,563 405,590 440,635 480,657 515,678 530,658 560,622 610,590 650,562 730,578 770,610 810,640 840,675 860,708 950,705 990,670 1040,660 1070,632 1130,615 1190,600 1230,558 1270,495 1300,458 1320,465 1350,505 1390,560 1420,630 1500,633 1560,628 1610,600 1670,572 1720,568 1790,558 1830,530 1860,510 1890,522 1930,535 1965,565 1985,567 2010,545 2040,500 2080,425 2115,372 2153,342',
      white: '39,640 65,655 95,655 130,635 165,598 190,578 210,550 245,543 270,565 310,583 345,560 375,547 390,555 410,615 430,680 450,722 465,705 490,655 515,625 560,605 600,578 630,555 653,543 680,568 710,600 740,603 770,645 800,682 835,692 857,735 895,715 920,683 965,692 990,655 1020,645 1050,655 1080,608 1110,593 1140,605 1170,625 1190,590 1215,530 1240,470 1265,440 1285,432 1300,445 1325,510 1345,575 1360,610 1385,625 1420,642 1450,636 1490,633 1520,638 1550,620 1580,608 1620,575 1650,553 1690,552 1715,580 1735,583 1770,545 1790,535 1800,538 1830,513 1855,487 1870,495 1890,545 1915,585 1930,590 1960,570 1995,545 2020,495 2045,450 2060,405 2080,370 2105,330 2125,333 2153,328',
      magenta: '39,475 80,532 130,583 180,622 240,603 310,582 350,567 390,563 430,590 500,617 560,627 630,627 660,602 720,583 770,590 830,617 880,655 960,692 1045,685 1090,660 1160,635 1200,608 1255,562 1310,527 1405,534 1450,555 1500,600 1540,627 1600,623 1650,602 1720,587 1770,567 1840,543 1870,537 1890,543 1990,538 2050,515 2100,483 2153,427'
    },
    macd: '39,1262 75,1278 100,1260 150,1195 190,1155 210,1127 245,1114 310,1126 330,1105 385,1100 410,1160 430,1205 448,1216 495,1165 520,1157 545,1125 565,1115 590,1085 630,1065 650,1048 680,1075 710,1095 735,1097 765,1145 800,1160 830,1190 857,1216 900,1178 930,1163 960,1160 985,1113 1025,1110 1060,1090 1080,1065 1110,1053 1160,1072 1190,1045 1215,1000 1245,955 1285,937 1300,950 1330,1035 1380,1120 1410,1155 1430,1162 1510,1162 1530,1145 1580,1125 1600,1097 1650,1063 1685,1068 1720,1087 1750,1063 1795,1062 1820,1043 1853,1023 1870,1045 1890,1083 1920,1105 1945,1112 1990,1085 2010,1070 2030,1033 2050,1015 2065,980 2085,945 2115,925 2130,934 2153,932',
    signal: '39,1175 60,1225 80,1248 110,1264 150,1257 190,1220 240,1155 280,1124 340,1115 395,1110 430,1130 480,1175 510,1189 540,1178 600,1120 650,1080 690,1070 740,1078 790,1115 850,1172 910,1193 960,1182 1020,1140 1080,1097 1140,1067 1200,1060 1240,1030 1300,963 1320,960 1350,985 1390,1045 1430,1115 1470,1152 1510,1162 1570,1150 1620,1118 1680,1082 1720,1076 1800,1073 1860,1047 1890,1046 1920,1057 1960,1085 1990,1100 2020,1093 2060,1055 2120,975 2153,945',
    hist: '41,1260 53,1215 65,1197 77,1165 89,1140 101,1106 113,1075 137,1030 161,1002 173,1000 185,1003 209,990 233,1021 257,1060 281,1086 293,1104 305,1112 317,1108 329,1080 353,1077 377,1080 389,1090 401,1140 413,1203 425,1242 449,1227 461,1185 473,1140 485,1102 497,1068 509,1050 521,1045 533,1024 545,1017 569,1038 581,1026 605,1026 629,1045 641,1037 653,1042 665,1075 677,1110 701,1143 713,1148 725,1138 737,1138 749,1172 761,1191 785,1172 809,1182 833,1170 857,1172 869,1150 881,1122 893,1088 917,1059 941,1059 965,1065 977,1040 989,1018 1013,1047 1025,1055 1061,1050 1073,1036 1109,1047 1145,1090 1157,1120 1169,1122 1181,1092 1205,1045 1229,990 1241,975 1253,978 1277,1013 1289,1038 1301,1074 1313,1143 1325,1205 1337,1245 1349,1265 1361,1272 1373,1271 1385,1268 1397,1248 1421,1205 1445,1160 1469,1132 1481,1118 1493,1102 1505,1106 1517,1106 1529,1080 1541,1065 1565,1062 1589,1040 1601,1035 1625,1050 1649,1035 1661,1060 1685,1080 1697,1106 1709,1120 1721,1124 1733,1110 1745,1090 1757,1080 1781,1080 1793,1085 1805,1070 1817,1062 1829,1065 1853,1056 1865,1083 1877,1128 1889,1165 1901,1182 1913,1188 1925,1182 1949,1160 1961,1133 1973,1103 1985,1080 1997,1068 2009,1037 2021,1008 2033,1008 2045,1000 2057,978 2081,968 2105,993 2117,1015 2129,1047 2141,1060 2153,1080'
  }
};

const BARS = 177;
const STEP = 12;
const COLORS = { gray: '#a9a9a9', green: '#32cd32', gold: '#ffd700', white: '#fff', magenta: '#f0f' };

const parse = s => s.split(' ').map(p => p.split(',').map(Number));
const snap = v => Math.round(v / 3) * 3;

function sample(points, x) {
  if (x <= points[0][0]) return points[0][1];
  for (let i = 1; i < points.length; i++) {
    const [x1, y1] = points[i - 1];
    const [x2, y2] = points[i];
    if (x <= x2) return y1 + (y2 - y1) * (x - x1) / (x2 - x1);
  }
  return points[points.length - 1][1];
}

const nearest = (points, x) => points.find(p => Math.abs(p[0] - x) < 6);
const rect = (x, y, w, h) => `M${x} ${y}h${w}v${h}h${-w}z`;
const fill = (d, color) => `<path d="${d}" fill="${color}" shape-rendering="crispEdges"/>`;
const line = (pts, color, width) =>
  `<polyline points="${pts}" fill="none" stroke="${color}" stroke-width="${width}" shape-rendering="crispEdges"/>`;

function drawPrice(svg, c) {
  const close = parse(c.close);
  const wicks = Object.entries(c.wicks).map(([x, w]) => [Number(x), w]);
  let up = '', down = '';
  let prev = close[0][1];
  for (let i = 0; i < BARS; i++) {
    const x = c.x0 + i * STEP;
    const anchor = nearest(close, x);
    const y = anchor ? anchor[1] : sample(close, x);
    const open = anchor && anchor[2] ? anchor[2] : prev;
    const wick = (nearest(wicks, x) || [0, []])[1];
    const body = Math.abs(y - open);
    const top = wick[0] || Math.min(open, y) - 3 - (i * 7 % 5) * (2 + body * 0.04);
    const bottom = wick[1] || Math.max(open, y) + 2 + (i * 11 % 7) * (1.5 + body * 0.03);
    const d = rect(x - 4.5, snap(Math.min(open, y)), 9, Math.max(3, snap(body))) +
      rect(x - 1.5, snap(top), 3, snap(bottom - top));
    if (y <= open) up += d; else down += d;
    prev = y;
  }
  const mark = c.x0 + 2127;
  svg.innerHTML =
    fill(rect(0, c.line - c.line % 3, 2800, 3), '#778899') +
    fill(up, '#f00') + fill(down, '#0f0') +
    Object.entries(c.ma).map(([name, pts]) => line(pts, COLORS[name], 6)).join('') +
    fill(`M${mark - 14} ${c.top}h28l-14 15z`, '#778899');
}

function drawMacd(svg, c) {
  const hist = parse(c.hist);
  const groups = { '#f00': '', '#800000': '', '#32cd32': '', '#006400': '' };
  let prev = 0;
  for (let i = 0; i < BARS; i++) {
    const x = c.x0 + i * STEP;
    const v = c.zero - sample(hist, x);
    const key = v > 0 ? (v >= prev ? '#f00' : '#800000') : (v <= prev ? '#32cd32' : '#006400');
    const h = Math.max(3, snap(Math.abs(v)));
    groups[key] += rect(x - 4.5, v > 0 ? c.zero - h : c.zero, 9, h);
    prev = v;
  }
  svg.innerHTML =
    Object.entries(groups).map(([color, d]) => fill(d, color)).join('') +
    line(c.macd, '#fff', 3) + line(c.signal, '#ff0', 3);
}

document.querySelectorAll('.price').forEach(svg => drawPrice(svg, CHARTS[svg.dataset.chart]));
document.querySelectorAll('.macd').forEach(svg => drawMacd(svg, CHARTS[svg.dataset.chart]));
```
